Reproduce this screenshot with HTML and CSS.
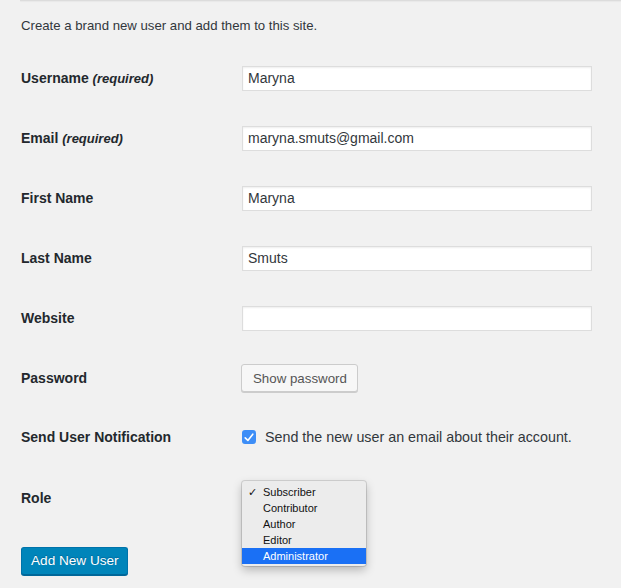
FILE: index.html
```html
<!DOCTYPE html>
<html>
<head>
<meta charset="utf-8">
<link rel="stylesheet" href="styles.css">
</head>
<body>
<div class="topline"></div>
<div class="wrap">
  <p class="intro">Create a brand new user and add them to this site.</p>
  <div class="form-table">
    <div class="row">
      <div class="label">Username <span class="req">(required)</span></div>
      <div class="field"><input class="text" type="text" value="Maryna"></div>
    </div>
    <div class="row">
      <div class="label">Email <span class="req">(required)</span></div>
      <div class="field"><input class="text" type="text" value="maryna.smuts@gmail.com"></div>
    </div>
    <div class="row">
      <div class="label">First Name</div>
      <div class="field"><input class="text" type="text" value="Maryna"></div>
    </div>
    <div class="row">
      <div class="label">Last Name</div>
      <div class="field"><input class="text" type="text" value="Smuts"></div>
    </div>
    <div class="row">
      <div class="label">Website</div>
      <div class="field"><input class="text" type="text" value=""></div>
    </div>
    <div class="row">
      <div class="label">Password</div>
      <div class="field"><button class="btn-secondary" type="button">Show password</button></div>
    </div>
    <div class="row row-notify">
      <div class="label">Send User Notification</div>
      <div class="field check-field">
        <span class="checkbox"><svg width="10" height="9" viewBox="0 0 10 9"><path d="M1.2 4.8 L3.9 7.4 L8.8 1.2" fill="none" stroke="#fff" stroke-width="1.6" stroke-linecap="round" stroke-linejoin="round"/></svg></span>
        <span class="check-label">Send the new user an email about their account.</span>
      </div>
    </div>
    <div class="row">
      <div class="label">Role</div>
      <div class="field role-field">
        <ul class="menu">
          <li class="checked"><span class="tick">✓</span>Subscriber</li>
          <li>Contributor</li>
          <li>Author</li>
          <li>Editor</li>
          <li class="active">Administrator</li>
        </ul>
      </div>
    </div>
  </div>
  <button class="btn-primary" type="button">Add New User</button>
</div>
</body>
</html>
```

FILE: styles.css
```css
html, body {
  margin: 0;
  padding: 0;
  background: #f1f1f1;
}
body {
  font-family: "Liberation Sans", Arial, sans-serif;
  color: #23282d;
  width: 621px;
  height: 588px;
  overflow: hidden;
}
.topline {
  margin-left: 20px;
  height: 1px;
  background: #dcdcdc;
  box-shadow: 0 1px 1px rgba(0,0,0,0.04);
}
.wrap {
  padding-left: 21px;
}
.intro {
  margin: 17px 0 0;
  font-size: 13.2px;
  line-height: 16px;
  color: #32373c;
}
.form-table {
  margin-top: 14px;
}
.row {
  display: grid;
  grid-template-columns: 221px 1fr;
  height: 60px;
  align-items: center;
}
.row-notify {
  padding-bottom: 2px;
  box-sizing: border-box;
}
.label {
  font-size: 14px;
  font-weight: bold;
  line-height: 18px;
  color: #23282d;
}
.req {
  font-style: italic;
  font-size: 13px;
}
.field {
  display: flex;
  align-items: center;
}
input.text {
  box-sizing: border-box;
  width: 350px;
  height: 25px;
  margin: 0;
  border: 1px solid #ddd;
  background: #fff;
  box-shadow: inset 0 1px 2px rgba(0,0,0,0.07);
  font-family: "Liberation Sans", Arial, sans-serif;
  font-size: 14px;
  color: #32373c;
  padding: 0 5px;
  outline: none;
}
.btn-secondary {
  box-sizing: border-box;
  height: 28px;
  margin: 0 0 0 -1px;
  padding: 0 10px 0 11px;
  border: 1px solid #cccccc;
  border-radius: 3px;
  background: #f7f7f7;
  box-shadow: 0 1px 0 #ccc;
  font-family: "Liberation Sans", Arial, sans-serif;
  font-size: 13.3px;
  color: #555;
}
.check-field {
  gap: 9px;
}
.checkbox {
  box-sizing: border-box;
  width: 14px;
  height: 14px;
  border-radius: 3px;
  background: #3d8ef7;
  display: flex;
  align-items: center;
  justify-content: center;
}
.check-label {
  font-size: 14.3px;
  color: #32373c;
}
.role-field {
  position: relative;
  height: 20px;
}
.menu {
  position: absolute;
  left: 0;
  top: -7px;
  width: 124px;
  margin: 0;
  padding: 3px 0 2px;
  list-style: none;
  background: #ececec;
  border-radius: 3px;
  box-shadow: 0 0 0 1px rgba(0,0,0,0.12), 0 4px 10px rgba(0,0,0,0.25);
  font-size: 11px;
  line-height: 16px;
  color: #111;
}
.menu li {
  position: relative;
  padding-left: 21px;
}
.menu .tick {
  position: absolute;
  left: 6px;
  font-size: 11px;
}
.menu li.active {
  background: #1a70f5;
  color: #fff;
}
.btn-primary {
  display: block;
  box-sizing: border-box;
  margin-top: 19px;
  height: 28px;
  padding: 0 8px 1px 9px;
  border: 1px solid #0073aa;
  border-bottom-color: #006799;
  border-radius: 3px;
  background: #0085ba;
  box-shadow: 0 1px 0 #006799;
  font-family: "Liberation Sans", Arial, sans-serif;
  font-size: 13.6px;
  color: #fff;
  text-shadow: 0 -1px 1px #006799;
}
```
